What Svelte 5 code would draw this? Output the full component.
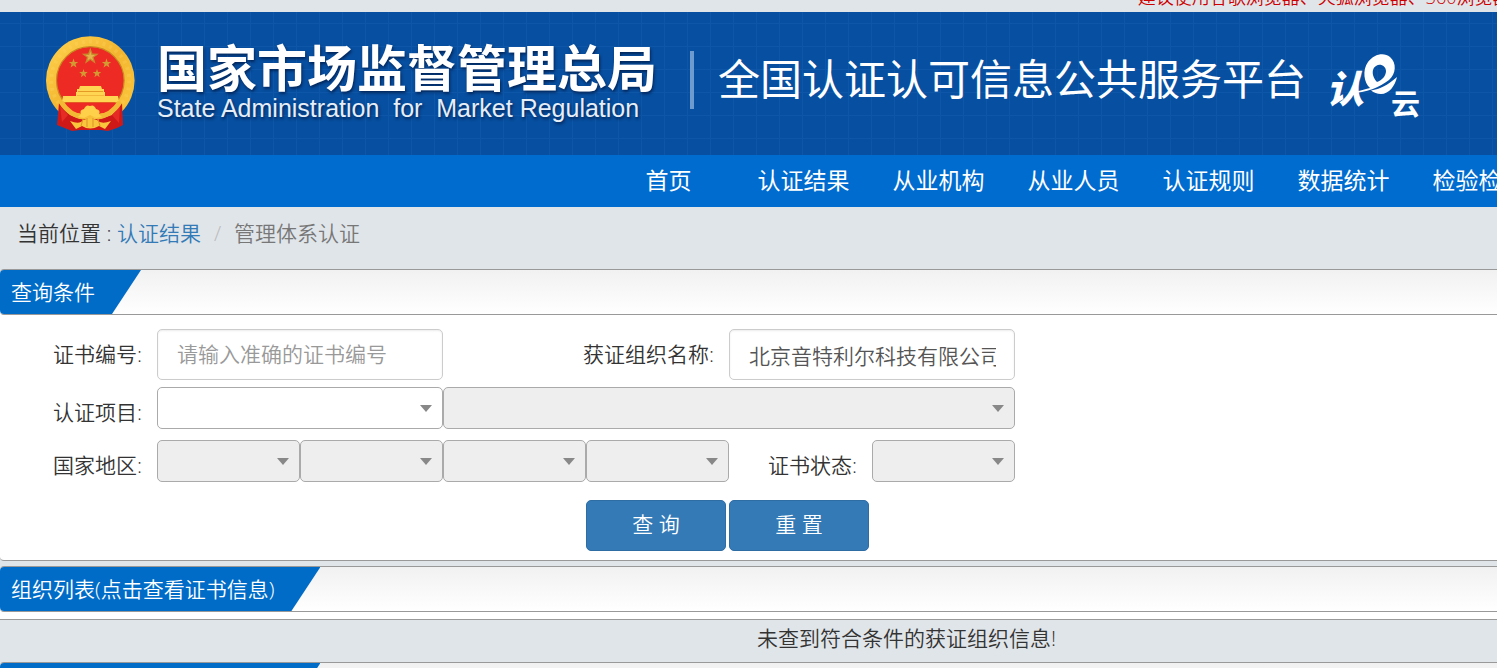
<script>
  const navItems = ['首页', '认证结果', '从业机构', '从业人员', '认证规则', '数据统计', '检验检测'];
  const regions = ['国家', '省', '市', '区县'];
  const smallStars = [
    [27.5, 27.5, 5],
    [60.5, 27.5, 5],
    [37.5, 37.5, 4.5],
    [51, 37.5, 4.5]
  ];
  let certNo = $state('');
  let orgName = $state('北京音特利尔科技有限公司');

  function star(cx, cy, r) {
    return Array.from({ length: 10 }, (_, i) => {
      const a = -Math.PI / 2 + (i * Math.PI) / 5;
      const d = i % 2 ? r * 0.4 : r;
      return `${(cx + d * Math.cos(a)).toFixed(2)},${(cy + d * Math.sin(a)).toFixed(2)}`;
    }).join(' ');
  }

  function reset() {
    certNo = '';
    orgName = '';
  }
</script>

<div class="page">
  <div class="notice"><p>建议使用谷歌浏览器、火狐浏览器、360浏览器</p></div>

  <header class="banner">
    <svg class="emblem" viewBox="0 0 89 96" aria-hidden="true">
      <defs>
        <linearGradient id="gold" x1="0" y1="0" x2="1" y2="1">
          <stop offset="0" stop-color="#ffd34f" />
          <stop offset="0.5" stop-color="#f3b52f" />
          <stop offset="1" stop-color="#fcc93f" />
        </linearGradient>
      </defs>
      <circle cx="44.3" cy="44.5" r="44.3" fill="url(#gold)" />
      <circle cx="44.3" cy="44.5" r="39" fill="none" stroke="#ffdc6b" stroke-width="4" stroke-dasharray="3 4" opacity="0.25" />
      <circle cx="44.3" cy="44.5" r="33.8" fill="#ee2a24" stroke="#c88a20" stroke-width="1.2" />
      <polygon points={star(44.3, 20.5, 9)} fill="#c98a2b" />
      <polygon points={star(44.3, 20.5, 5)} fill="#e8b04b" />
      {#each smallStars as s}
        <polygon points={star(s[0], s[1], s[2])} fill="#d39a32" />
      {/each}
      <path d="M34 50h21l1 3h2v3H31v-3h2zM30 56h29v4H30z" fill="#ffd552" />
      <path d="M32 55.5h25M31 60h27" stroke="#e59a26" stroke-width="1" />
      <path d="M17 60h55l1 6H16z" fill="#ffd552" />
      <path d="M17 67h55" stroke="#dc8b20" stroke-width="1" />
      <path d="M13 67 24 79 34 83 54 83 66 79 76 67 77 89 71 92 62 95 55 94H34L26 95 11 89z" fill="#cf1919" />
      <path d="M17 67H72Q66 78 51 78H38Q23 78 17 67z" fill="#ee2a24" />
      <path d="M14 70 22 79 16 86zM74 70 66 79 73 87z" fill="#e52b24" />
      <path d="M15 66q9 14 23 15M74 66q-9 14-23 15" fill="none" stroke="#f3b934" stroke-width="5" />
      <path d="M35 78q-2-4 3-5 2-5 6-3 4-2 6 3 5 1 3 5l3 3-6 1-6-3-6 3-6-1z" fill="#ffd04a" />
      <path d="M24 85q10 4 13-1 7-3 14 0 4 5 14 1l-6 8-6-3q-9 5-17 0l-6 3z" fill="#fac63c" />
      <path d="M37 83l-2 7M41 82v9M47 82v9M52 83l2 7" stroke="#dd9426" stroke-width="1" />
    </svg>
    <div class="agency">
      <strong>国家市场监督管理总局</strong>
      <span>State Administration&nbsp; for&nbsp; Market Regulation</span>
    </div>
    <div class="divider"></div>
    <h1>全国认证认可信息公共服务平台</h1>
    <svg class="cloud" viewBox="0 0 94 68" role="img" aria-label="认e云">
      <text class="brush" x="-2" y="50">认</text>
      <path
        fill-rule="evenodd"
        d="M42 35C36 30 34 17 40 9C46 1 56 -1 62 4C69 10 68 21 61 27C52 34 38 40 23 40C31 38 37 36 42 35ZM49 29C44 24 43 16 48 13C52 10 58 13 58 18C58 23 54 27 49 29Z"
      />
      <path d="M43 37.5C52 36 60 32 69 24C67 33 61 41 53 41C49 41 46 39.500 43 37.500Z" />
      <text class="bold" x="63" y="62">云</text>
    </svg>
  </header>

  <nav aria-label="主导航">
    {#each navItems as item}
      <a href="#top">{item}</a>
    {/each}
  </nav>

  <div class="crumbs">
    <span>当前位置 :&nbsp;</span><a href="#results">认证结果</a><i>/</i><span class="current">管理体系认证</span>
  </div>

  <section class="panel">
    <div class="head"><h2>查询条件</h2></div>
    <form onsubmit={(e) => e.preventDefault()}>
      <div class="row">
        <label for="cert">证书编号:</label>
        <input id="cert" class="two" type="text" placeholder="请输入准确的证书编号" bind:value={certNo} />
        <label for="org" class="two">获证组织名称:</label>
        <input id="org" class="two value" type="text" bind:value={orgName} />
      </div>
      <div class="row low">
        <label for="project">认证项目:</label>
        <div class="pick two"><select id="project"><option></option></select></div>
        <div class="pick four"><select disabled aria-label="认证项目明细"><option></option></select></div>
      </div>
      <div class="row low">
        <label for="region0">国家地区:</label>
        {#each regions as region, i}
          <div class="pick"><select id={'region' + i} disabled aria-label={region}><option></option></select></div>
        {/each}
        <label for="status">证书状态:</label>
        <div class="pick"><select id="status" disabled><option></option></select></div>
      </div>
      <div class="row actions">
        <button type="submit">查 询</button>
        <button type="button" onclick={reset}>重 置</button>
      </div>
    </form>
  </section>

  <section class="panel list">
    <div class="head"><h2>组织列表(点击查看证书信息)</h2></div>
    <p class="empty">未查到符合条件的获证组织信息!</p>
  </section>

  <section class="panel next">
    <div class="head"><h2>证书列表(点击查看详细信息)</h2></div>
  </section>
</div>

<style>
  :global(body) {
    margin: 0;
    background: #e0e5e9;
    overflow: hidden;
  }
  * {
    box-sizing: border-box;
  }
  .page {
    height: 100vh;
    overflow: hidden;
    color: #333;
    font: 350 21px/30px 'Open Sans', 'Noto Sans CJK SC', sans-serif;
  }
  p,
  h1,
  h2 {
    margin: 0;
    font-weight: inherit;
    white-space: nowrap;
  }
  a {
    text-decoration: none;
  }
  .notice {
    display: flex;
    align-items: flex-end;
    height: 12px;
    padding: 0 0 3px 76%;
    overflow: hidden;
    color: #c00;
    font-size: 18px;
    line-height: 24px;
  }
  .banner {
    display: flex;
    align-items: flex-start;
    height: 143px;
    padding: 24px 0 0 46px;
    overflow: hidden;
    color: #fff;
    background-color: #074fa0;
    background-image: linear-gradient(90deg, #0e57a8 1px, transparent 1px),
      linear-gradient(#0e57a8 1px, transparent 1px);
    background-size: 23px 23px;
    background-position: 20px 11px;
  }
  .banner > * {
    flex: none;
  }
  .emblem {
    width: 89px;
    height: 96px;
  }
  .agency {
    display: flex;
    flex-direction: column;
    margin-left: 22px;
    width: 510px;
    white-space: nowrap;
    text-shadow: 1px 2px 3px rgba(0, 20, 60, 0.7);
  }
  .agency strong {
    font: 700 50px/58px 'Noto Sans CJK SC', sans-serif;
  }
  .agency span {
    font: 400 25px/28px 'Liberation Sans', sans-serif;
    color: #e6eef8;
  }
  .divider {
    width: 4px;
    height: 58px;
    margin: 15px 0 0 23px;
    background: #6e9bcf;
  }
  h1 {
    margin-left: 24px;
    padding-top: 12px;
    font: 400 42px/58px 'Noto Sans CJK SC', sans-serif;
  }
  .cloud {
    width: 94px;
    height: 68px;
    margin: 17px 0 0 22px;
    overflow: visible;
    fill: #fff;
  }
  .brush {
    font: italic 900 38px 'Noto Sans CJK SC', sans-serif;
  }
  .bold {
    font: 700 29px 'Noto Sans CJK SC', sans-serif;
  }
  nav {
    display: flex;
    height: 52px;
    padding-left: 601px;
    overflow: hidden;
    background: #006cd0;
  }
  nav a {
    flex: 0 0 135px;
    color: #fff;
    font-size: 23px;
    font-weight: 400;
    line-height: 50px;
    text-align: center;
    white-space: nowrap;
  }
  .crumbs {
    display: flex;
    height: 62px;
    padding: 11px 17px;
    white-space: nowrap;
  }
  .crumbs a {
    color: #337ab7;
  }
  .crumbs i {
    padding: 0 13px;
    color: #bbb;
    font-style: normal;
  }
  .current {
    color: #777;
  }
  .panel {
    background: #fff;
    border-bottom: 1px solid #999;
    border-radius: 4px 0 0 4px;
  }
  .head {
    display: flex;
    height: 46px;
    border: solid #999;
    border-width: 1px 0;
    background: linear-gradient(#f1f1f1, #fff);
    border-radius: 4px 0 0 4px;
  }
  h2 {
    padding: 0 46px 0 11px;
    color: #fff;
    background: #006cc8;
    font-size: 21px;
    line-height: 44px;
    border-radius: 4px 0 0 4px;
    clip-path: polygon(0 0, 100% 0, calc(100% - 29px) 100%, 0 100%);
  }
  form {
    display: flex;
    flex-direction: column;
    padding: 14px 14px 9px;
  }
  .row {
    display: grid;
    grid-template-columns: repeat(7, minmax(0, 143px));
  }
  .low {
    padding-top: 7px;
  }
  .low + .low {
    padding-top: 11px;
  }
  label {
    padding-right: 15px;
    line-height: 50px;
    text-align: right;
    white-space: nowrap;
  }
  .low label {
    height: 42px;
  }
  .two {
    grid-column: span 2;
  }
  .four {
    grid-column: span 4;
  }
  input {
    width: 100%;
    height: 51px;
    padding: 0 18px 2px 19px;
    border: 1px solid #ccc;
    border-radius: 5px;
    background: #fff;
    box-shadow: inset 0 1px 2px rgba(0, 0, 0, 0.08);
    color: #555;
    font: inherit;
  }
  .value {
    padding-bottom: 0;
  }
  input::placeholder {
    color: #999;
    opacity: 1;
  }
  .pick {
    position: relative;
  }
  .pick::after {
    content: '';
    position: absolute;
    top: 18px;
    right: 11px;
    border: 6px solid transparent;
    border-top: 7px solid #888;
    border-bottom: 0;
    pointer-events: none;
  }
  select {
    display: block;
    width: 100%;
    height: 42px;
    border: 1px solid #aaa;
    border-radius: 5px;
    background: #fff;
    appearance: none;
    font: inherit;
  }
  select:disabled {
    background: #eee;
    opacity: 1;
  }
  .actions {
    padding-top: 18px;
  }
  button {
    width: 140px;
    height: 51px;
    padding: 0 0 4px;
    border: 1px solid #2e6da4;
    border-radius: 5px;
    background: #337ab7;
    color: #fff;
    font: inherit;
  }
  button:first-child {
    grid-column-start: 5;
  }
  .list {
    margin-top: 5px;
  }
  .empty {
    height: 43px;
    margin-top: 7px;
    padding-left: 316px;
    border-top: 1px solid #999;
    background: #e0e5e9;
    line-height: 36px;
    text-align: center;
  }
  .next {
    margin-top: -1px;
  }
</style>
